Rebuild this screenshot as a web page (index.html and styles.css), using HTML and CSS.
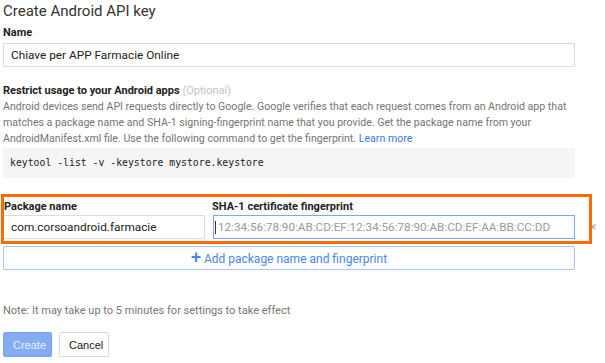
FILE: index.html
```html
<!DOCTYPE html>
<html lang="en">
<head>
    <meta charset="UTF-8">
    <title>Create Android API key</title>
    <link rel="stylesheet" href="styles.css">
</head>
<body>
<div class="page">
    <h1>Create Android API key</h1>

    <div class="field">
        <label class="label" for="keyName">Name</label>
        <input class="text-input" id="keyName" type="text" value="Chiave per APP Farmacie Online">
    </div>

    <div class="section">
        <div class="label">Restrict usage to your Android apps <span class="optional">(Optional)</span></div>
        <p class="help">Android devices send API requests directly to Google. Google verifies that each request comes from an Android app that matches a package name and SHA-1 signing-fingerprint name that you provide. Get the package name from your AndroidManifest.xml file. Use the following command to get the fingerprint. <a class="learn" href="#">Learn more</a></p>
        <pre class="code">keytool -list -v -keystore mystore.keystore</pre>
    </div>

    <div class="app-row">
        <div class="app-field pkg">
            <label class="label" for="pkg">Package name</label>
            <input class="text-input" id="pkg" type="text" value="com.corsoandroid.farmacie">
        </div>
        <div class="app-field sha">
            <label class="label" for="sha">SHA-1 certificate fingerprint</label>
            <div class="input-wrap">
                <input class="text-input focused" id="sha" type="text" placeholder="12:34:56:78:90:AB:CD:EF:12:34:56:78:90:AB:CD:EF:AA:BB:CC:DD">
                <span class="caret"></span>
            </div>
        </div>
        <span class="remove">&times;</span>
        <div class="highlight"></div>
    </div>

    <button class="add-btn"><span class="plus">+</span> Add package name and fingerprint</button>

    <p class="note">Note: It may take up to 5 minutes for settings to take effect</p>

    <div class="actions">
        <button class="btn primary" disabled>Create</button>
        <button class="btn">Cancel</button>
    </div>
</div>
</body>
</html>
```

FILE: styles.css
```css
body {
    margin: 0;
    padding: 0;
    background: #ffffff;
    font-family: 'Roboto', 'Arial', sans-serif;
    color: #222;
}
.page {
    width: 572px;
    padding: 0 0 0 3px;
}
h1 {
    margin: 0;
    padding-top: 1px;
    font-size: 15px;
    line-height: 20px;
    font-weight: 400;
    color: #333;
}
.label {
    display: block;
    font-size: 11px;
    line-height: 14px;
    font-weight: 700;
    color: #222;
}
.field {
    margin-top: 5px;
}
.field .label {
    margin-bottom: 3px;
}
.text-input {
    display: block;
    box-sizing: border-box;
    width: 100%;
    height: 24px;
    margin: 0;
    padding: 0 7px;
    border: 1px solid #dcdcdc;
    border-radius: 0;
    font-family: 'Roboto', 'Arial', sans-serif;
    font-size: 11.8px;
    color: #222;
    background: #fff;
    outline: none;
}
.text-input.focused {
    padding-left: 4px;
    border-color: #7ea7f2;
    font-size: 11.7px;
}
.text-input::placeholder {
    color: #9a9a9a;
}
.input-wrap {
    position: relative;
}
.caret {
    position: absolute;
    left: 2px;
    top: 6px;
    width: 1px;
    height: 13px;
    background: #333;
}
.section {
    margin-top: 17px;
}
.optional {
    font-weight: 400;
    color: #c4c4c4;
}
.help {
    margin: 1px 0 0;
    font-size: 10.6px;
    line-height: 16px;
    color: #757575;
}
.learn {
    color: #3b78e7;
    text-decoration: none;
}
.code {
    margin: 1px 0 0;
    height: 30px;
    padding: 0 7px;
    background: #f5f5f5;
    font-family: 'DejaVu Sans Mono', 'Liberation Mono', monospace;
    font-size: 9.8px;
    line-height: 30px;
    color: #222;
}
.app-row {
    position: relative;
    display: flex;
    align-items: flex-end;
    margin-top: 22px;
}
.app-field {
    flex-shrink: 0;
}
.app-field .label {
    margin-bottom: 1px;
}
.pkg {
    width: 202px;
}
.pkg .label {
    padding-left: 1px;
}
.sha {
    width: 362px;
    margin-left: 8px;
}
.sha .label {
    margin-left: -1px;
}
.remove {
    flex-shrink: 0;
    margin-left: 15px;
    margin-bottom: 6px;
    font-size: 12px;
    line-height: 12px;
    color: #aaa;
}
.highlight {
    position: absolute;
    left: -2px;
    top: -6px;
    width: 585px;
    height: 44px;
    border: 3px solid #ff6a00;
    pointer-events: none;
}
.add-btn {
    display: block;
    box-sizing: border-box;
    width: 572px;
    height: 24px;
    margin-top: 7px;
    padding: 0;
    border: 1px solid #a9c3f3;
    border-radius: 2px;
    background: #fff;
    font-family: 'Roboto', 'Arial', sans-serif;
    font-size: 12px;
    color: #4a84ec;
}
.plus {
    font-size: 18px;
    line-height: 12px;
    font-weight: 500;
}
.note {
    margin: 34px 0 0;
    font-size: 11px;
    line-height: 14px;
    color: #777;
}
.actions {
    display: flex;
    gap: 7px;
    margin-top: 14px;
}
.btn {
    box-sizing: border-box;
    height: 25px;
    padding: 0 9px;
    border: 1px solid #dcdcdc;
    border-radius: 2px;
    background: #fff;
    font-family: 'Liberation Sans', 'Arial', sans-serif;
    font-size: 11px;
    color: #222;
}
.btn.primary {
    width: 49px;
    border-color: #7ea3ee;
    background: #85abf3;
    color: #eaf0fd;
}
.btn + .btn {
    width: 50px;
    box-shadow: 0 1px 1px rgba(0, 0, 0, 0.08);
}
```
